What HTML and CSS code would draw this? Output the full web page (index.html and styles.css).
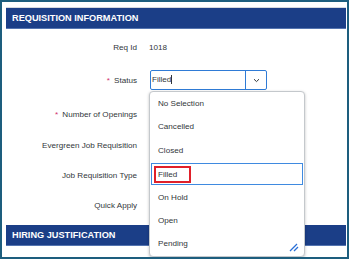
FILE: index.html
```html
<!DOCTYPE html>
<html lang="en">
<head>
    <meta charset="UTF-8">
    <meta name="viewport" content="width=device-width, initial-scale=1.0">
    <title>Requisition Information</title>
    <link rel="stylesheet" href="styles.css">
</head>
<body>
    <div class="frame">
        <div class="section-head first">REQUISITION INFORMATION</div>

        <div class="form">
            <div class="row">
                <span class="label">Req Id</span>
                <span class="value">1018</span>
            </div>
            <div class="row">
                <span class="label"><span class="req">*</span> Status</span>
                <div class="combo">
                    <div class="combo-input">Filled<span class="caret"></span></div>
                    <div class="combo-btn">
                        <svg width="7" height="5" viewBox="0 0 7 5"><path d="M1 1.2 L3.5 3.6 L6 1.2" fill="none" stroke="#32363a" stroke-width="1"/></svg>
                    </div>
                    <ul class="menu">
                        <li>No Selection</li>
                        <li>Cancelled</li>
                        <li>Closed</li>
                        <li class="active"><span class="mark">Filled</span></li>
                        <li>On Hold</li>
                        <li>Open</li>
                        <li>Pending</li>
                        <svg class="grip" width="10" height="9" viewBox="0 0 10 9"><path d="M1 8 L8 1 M5 8 L9 4" stroke="#2a6fd6" stroke-width="1.3"/></svg>
                    </ul>
                </div>
            </div>
            <div class="row">
                <span class="label"><span class="req">*</span> Number of Openings</span>
            </div>
            <div class="row">
                <span class="label">Evergreen Job Requisition</span>
            </div>
            <div class="row">
                <span class="label">Job Requisition Type</span>
            </div>
            <div class="row">
                <span class="label">Quick Apply</span>
            </div>
        </div>

        <div class="section-head">HIRING JUSTIFICATION</div>
    </div>
</body>
</html>
```

FILE: styles.css
```css
* {
    box-sizing: border-box;
}
body {
    margin: 0;
    font-family: "Liberation Sans", Arial, sans-serif;
    background: white;
}
.frame {
    width: 349px;
    height: 259px;
    border: 2px solid #1d5e7e;
    padding: 5px 1px 0 4px;
    overflow: hidden;
}
.section-head {
    height: 21px;
    background-color: #1b3e87;
    border-bottom: 1px solid #5474b0;
    color: white;
    font-weight: bold;
    font-size: 9.2px;
    line-height: 20px;
    padding-left: 6px;
    margin-top: 5px;
}
.section-head.first {
    margin-top: 0;
    border-top: 1px solid #d6d9de;
    height: 22px;
}
.form {
    display: grid;
    grid-template-columns: 131px 1fr;
    grid-template-rows: 30px 36px 32px 30px 30px 30px;
    column-gap: 12px;
    margin-top: 3px;
}
.row {
    display: contents;
}
.label, .value {
    align-self: center;
    font-size: 8.1px;
    color: #32363a;
}
.label {
    grid-column: 1;
    text-align: right;
}
.value {
    grid-column: 2;
}
.req {
    color: #d0326c;
    margin-right: 2px;
}
.combo {
    grid-column: 2;
    align-self: center;
    position: relative;
    width: 117px;
    height: 20px;
    margin-left: 1px;
    border: 1px solid #2f7bd6;
    border-radius: 2px;
    display: flex;
}
.combo-input {
    flex: 1;
    font-size: 8.1px;
    color: #32363a;
    line-height: 18px;
    padding-left: 1px;
}
.caret {
    display: inline-block;
    width: 1px;
    height: 9px;
    background: #32363a;
    vertical-align: -2px;
}
.combo-btn {
    width: 21px;
    border-left: 1px solid #2f7bd6;
    display: flex;
    align-items: center;
    justify-content: center;
}
.menu {
    position: absolute;
    top: 20px;
    left: -2px;
    width: 156px;
    margin: 0;
    padding: 0;
    list-style: none;
    background: white;
    border: 1px solid #c4c8cc;
    border-radius: 4px;
    box-shadow: 0 1px 3px rgba(0, 0, 0, 0.25);
    z-index: 2;
}
.menu li {
    height: 23.4px;
    line-height: 23.4px;
    font-size: 8.1px;
    color: #32363a;
    padding-left: 8px;
}
.menu li.active {
    margin: 1px;
    height: 21.4px;
    line-height: 19.4px;
    border: 1px solid #3f8ae0;
    padding-left: 2px;
}
.mark {
    display: inline-block;
    border: 2px solid #e0202a;
    height: 17px;
    line-height: 13px;
    padding: 0 12px 0 2px;
    vertical-align: middle;
}
.grip {
    position: absolute;
    right: 5px;
    bottom: 4px;
}
```
